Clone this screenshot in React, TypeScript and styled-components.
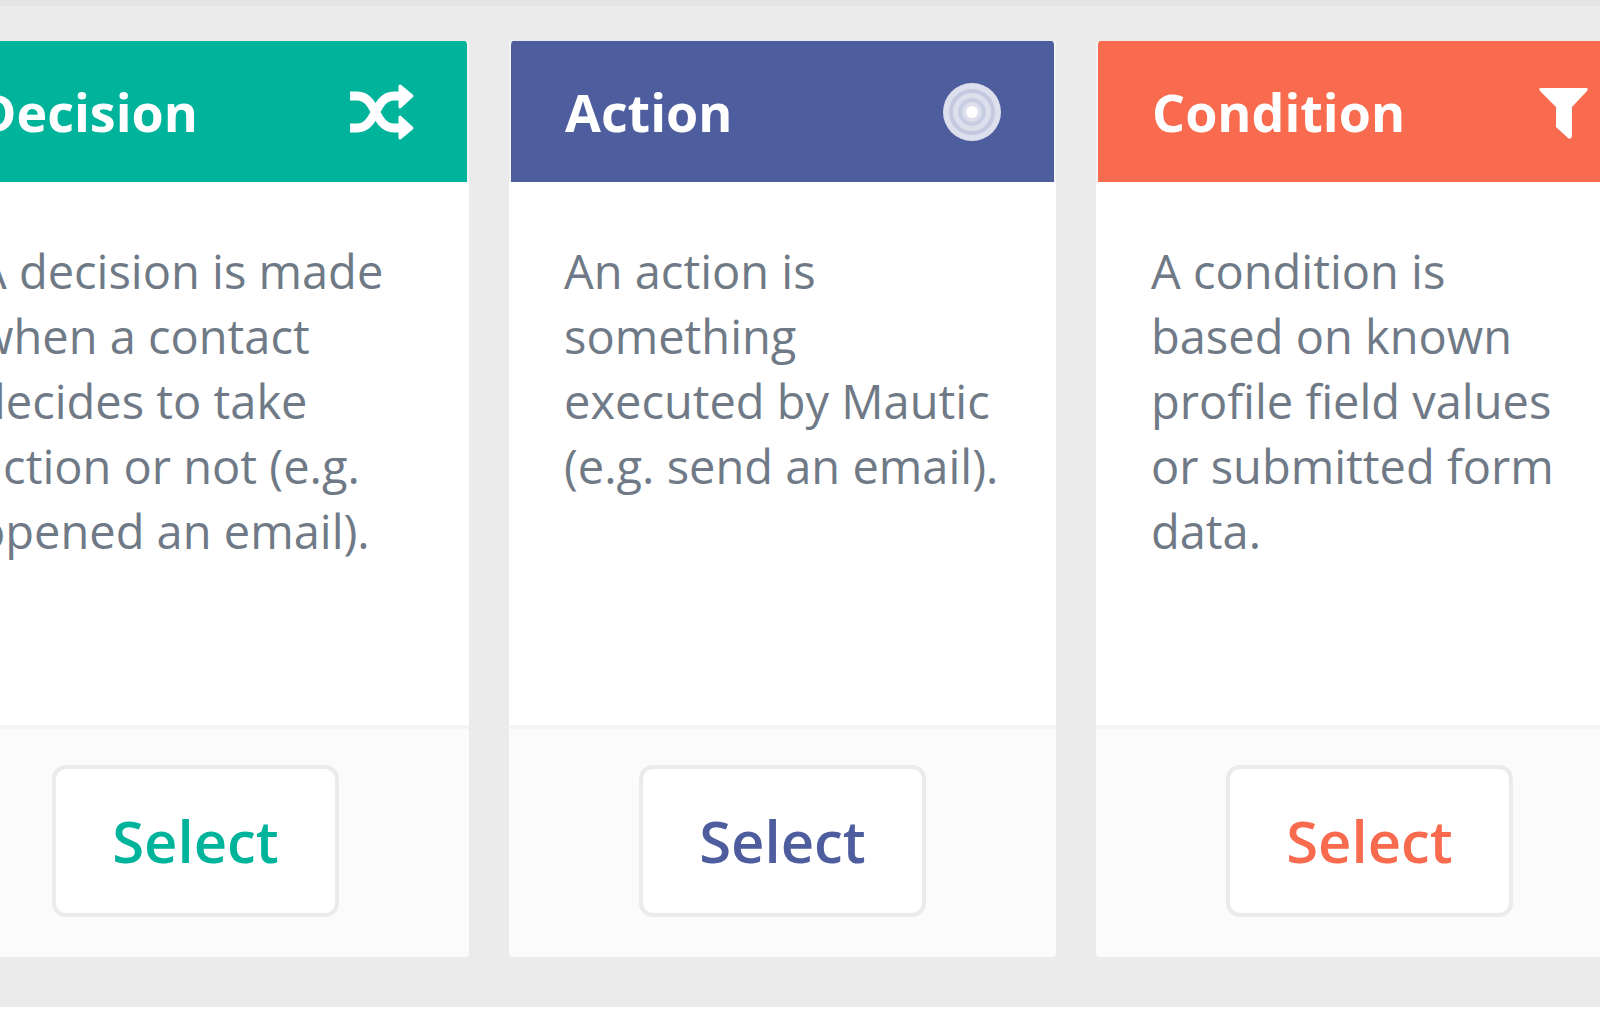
import React from "react";
import styled, { createGlobalStyle } from "styled-components";

const GlobalStyle = createGlobalStyle`
  *, *::before, *::after { box-sizing: border-box; }
  body {
    margin: 0;
    background: #ffffff;
    font-family: "Open Sans", "Noto Sans", sans-serif;
    overflow: hidden;
  }
`;

const Panel = styled.main`
  overflow: hidden;
  background: #ebebeb;
  border-top: 6px solid #e4e4e4;
  padding: 35px 0 50px;
`;

const CardRow = styled.div`
  display: grid;
  grid-template-columns: repeat(3, minmax(0, 1fr));
  gap: 40px;
  margin: 0 -43px 0 -78px;
`;

const Card = styled.section`
  display: flex;
  flex-direction: column;
  border-radius: 4px;
  overflow: hidden;
  background: #ffffff;
`;

const CardHeader = styled.header<{ $color: string }>`
  display: flex;
  align-items: center;
  justify-content: space-between;
  height: 141px;
  padding: 0 52px 0 54px;
  border: solid #f3f3f3;
  border-width: 0 2px;
  border-radius: 4px 4px 0 0;
  background: ${(p) => p.$color};
  background-clip: padding-box;
  color: #ffffff;
`;

const Title = styled.h2`
  margin: 0;
  font-size: 52px;
  line-height: 70px;
  font-weight: 700;
`;

const CardBody = styled.div`
  flex: 1;
  min-height: 543px;
  padding: 57px 56px 50px 55px;
`;

const Description = styled.p`
  margin: 0;
  color: #6f7a86;
  font-size: 47px;
  line-height: 65px;
`;

const CardFooter = styled.footer`
  display: flex;
  justify-content: center;
  padding: 36px 0 40px;
  border-top: 4px solid #f2f5f6;
  background: #fbfbfb;
`;

const SelectButton = styled.button<{ $color: string }>`
  padding: 37px 56px;
  border: 4px solid #ebebeb;
  border-radius: 14px;
  background: #ffffff;
  color: ${(p) => p.$color};
  font-family: inherit;
  font-size: 58px;
  line-height: 70px;
  font-weight: 600;
  cursor: pointer;
`;

const Icon = styled.svg`
  display: block;
  flex: none;
`;

const ShuffleIcon = () => (
  <Icon width="66" height="58" viewBox="0 0 66 58" aria-hidden="true">
    <g fill="none" stroke="#ffffff" strokeWidth="9">
      <path d="M1 13H8C28 13 25 45 45 45H52" />
      <path d="M1 45H8C28 45 25 13 45 13H52" />
    </g>
    <path
      d="M51 3L63 13L51 24ZM51 34L63 45L51 55Z"
      fill="#ffffff"
      stroke="#ffffff"
      strokeWidth="3"
      strokeLinejoin="round"
    />
  </Icon>
);

const TargetIcon = () => (
  <Icon width="60" height="60" viewBox="0 0 60 60" aria-hidden="true">
    <circle cx="30" cy="30" r="29" fill="#dddfed" />
    <circle cx="30" cy="30" r="21" fill="none" stroke="#c5c9e0" strokeWidth="4" />
    <circle cx="30" cy="30" r="12" fill="none" stroke="#c9cde2" strokeWidth="4" />
    <circle cx="30" cy="30" r="6" fill="#ffffff" />
  </Icon>
);

const FunnelIcon = () => (
  <Icon width="52" height="56" viewBox="0 0 52 56" aria-hidden="true">
    <path d="M4 4H49Q52 4 50 7L35 23V52Q34 56 31 54L19 43V23L3 7Q1 4 4 4Z" fill="#ffffff" />
  </Icon>
);

const steps = [
  {
    title: "Decision",
    color: "#00b49c",
    icon: <ShuffleIcon />,
    text: "A decision is made when a contact decides to take action or not (e.g. opened an email).",
  },
  {
    title: "Action",
    color: "#4e5d9d",
    icon: <TargetIcon />,
    text: "An action is something executed by Mautic (e.g. send an email).",
  },
  {
    title: "Condition",
    color: "#f96b4e",
    icon: <FunnelIcon />,
    text: "A condition is based on known profile field values or submitted form data.",
  },
];

export default function App() {
  return (
    <>
      <GlobalStyle />
      <Panel>
        <CardRow>
          {steps.map((step) => (
            <Card key={step.title}>
              <CardHeader $color={step.color}>
                <Title>{step.title}</Title>
                {step.icon}
              </CardHeader>
              <CardBody>
                <Description>{step.text}</Description>
              </CardBody>
              <CardFooter>
                <SelectButton type="button" $color={step.color}>
                  Select
                </SelectButton>
              </CardFooter>
            </Card>
          ))}
        </CardRow>
      </Panel>
    </>
  );
}
